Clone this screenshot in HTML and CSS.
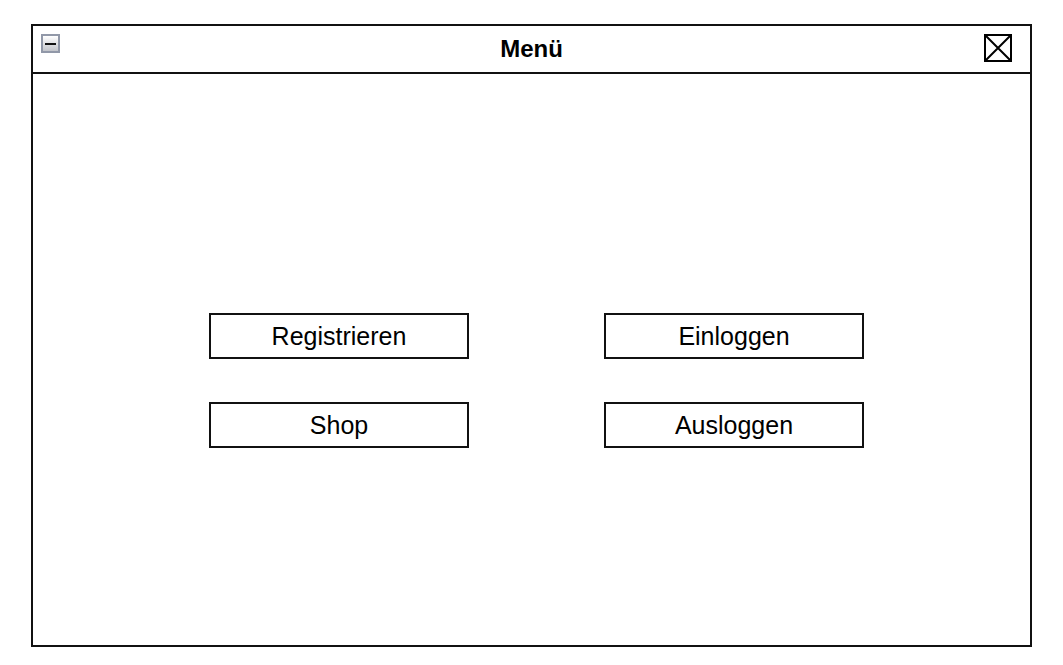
FILE: index.html
```html
<!DOCTYPE html>
<html lang="de">
  <head>
    <meta charset="UTF-8" />
    <meta name="viewport" content="width=device-width, initial-scale=1.0" />
    <title>Menü</title>
    <link rel="stylesheet" href="styles.css">
  </head>
  <body>
    <div class="window">
      <div class="titlebar">
        <span class="min-btn"><span class="dash"></span></span>
        <span class="title">Menü</span>
        <svg class="close-btn" width="28" height="28" viewBox="0 0 28 28">
          <rect x="1" y="1" width="26" height="26" fill="#fff" stroke="#000" stroke-width="2" />
          <path d="M2 2 L26 26 M26 2 L2 26" stroke="#000" stroke-width="2" />
        </svg>
      </div>
      <div class="content">
        <div class="buttons">
          <button class="btn">Registrieren</button>
          <button class="btn">Einloggen</button>
          <button class="btn">Shop</button>
          <button class="btn">Ausloggen</button>
        </div>
      </div>
    </div>
  </body>
</html>
```

FILE: styles.css
```css
body {
  margin: 0;
  background: #fff;
  font-family: "Liberation Sans", Arial, sans-serif;
}
.window {
  margin: 24px 0 0 31px;
  width: 997px;
  height: 619px;
  border: 2px solid #111;
  display: flex;
  flex-direction: column;
}
.titlebar {
  position: relative;
  height: 46px;
  border-bottom: 2px solid #111;
  display: flex;
  align-items: center;
  justify-content: center;
}
.title {
  font-weight: bold;
  font-size: 24px;
  color: #000;
}
.min-btn {
  position: absolute;
  left: 8px;
  top: 8px;
  width: 15px;
  height: 15px;
  border: 2px solid #9198a8;
  background: linear-gradient(#ffffff, #c2c4ca);
  display: flex;
  align-items: center;
  justify-content: center;
}
.dash {
  width: 11px;
  height: 2px;
  background: #111;
}
.close-btn {
  position: absolute;
  right: 18px;
  top: 8px;
}
.content {
  flex: 1;
  padding: 239px 0 0 176px;
}
.buttons {
  display: grid;
  grid-template-columns: 260px 260px;
  column-gap: 135px;
  row-gap: 43px;
}
.btn {
  height: 46px;
  border: 2px solid #111;
  background: #fff;
  font-family: "Liberation Sans", Arial, sans-serif;
  font-size: 25px;
  color: #000;
  padding: 0;
}
```
